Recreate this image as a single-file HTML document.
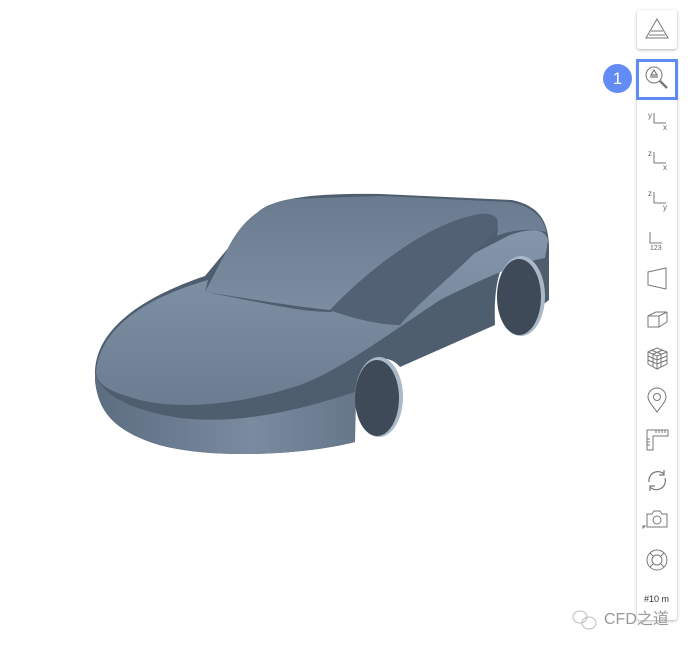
<!DOCTYPE html>
<html><head><meta charset="utf-8"><style>
html,body{margin:0;padding:0;background:#fff;width:692px;height:651px;overflow:hidden;position:relative;font-family:"Liberation Sans",sans-serif}
.box{position:absolute;background:#fff;border-radius:3px;box-shadow:0 1px 3px rgba(0,0,0,.3)}
</style></head><body>
<svg width="692" height="651" style="position:absolute;left:0;top:0">
<defs>
<linearGradient id="hood" x1="0" y1="0" x2="0" y2="1"><stop offset="0" stop-color="#8496ab"/><stop offset="1" stop-color="#6c7d91"/></linearGradient>
<linearGradient id="front" x1="0" y1="0" x2="1" y2="0"><stop offset="0" stop-color="#5d6d80"/><stop offset=".6" stop-color="#7a8ba0"/><stop offset="1" stop-color="#66778a"/></linearGradient>
<linearGradient id="roof" x1="0" y1="0" x2="0" y2="1"><stop offset="0" stop-color="#6a7b90"/><stop offset="1" stop-color="#7c8da2"/></linearGradient>
</defs>
<path d="M95,372 C96,330 140,298 205,276 L258,212 C275,197 320,193 380,194 L512,200 C540,206 548,222 549,245 L549,300 L541,306 C538,270 520,252 505,262 C496,275 494,300 495,325 L400,367 C388,352 362,356 356,392 L355,442 C300,456 200,460 150,442 C112,428 98,410 95,380 Z" fill="#4f5e6f"/>
<path d="M95,372 C100,395 130,410 180,418 C240,425 300,410 355,392 L355,442 C300,456 200,460 150,442 C112,428 98,410 95,380 Z" fill="url(#front)"/>
<path d="M96,372 C100,328 145,298 208,280 L205,292 C260,302 300,312 330,312 C390,300 470,255 510,235 C530,228 545,228 548,240 L545,258 C520,262 480,280 440,300 C380,340 340,370 300,385 C240,405 180,410 140,400 C110,392 97,385 96,372 Z" fill="url(#hood)"/>
<path d="M205,292 L228,248 C242,220 262,204 292,199 L380,196 L510,202 C532,206 544,218 546,232 C530,228 510,230 497,236 C500,222 495,213 480,214 C430,222 370,268 330,310 C290,306 245,298 205,292 Z" fill="url(#roof)"/>
<path d="M330,310 C370,268 430,222 480,214 C498,212 502,222 494,232 C470,262 420,300 400,325 C380,325 350,318 330,310 Z" fill="#526173"/>
<ellipse cx="521" cy="296" rx="24" ry="40" fill="#aab8c8"/>
<ellipse cx="519" cy="297" rx="22" ry="38" fill="#3f4a58"/>
<ellipse cx="379" cy="397" rx="24" ry="40" fill="#aab8c8"/>
<ellipse cx="377" cy="398" rx="22" ry="38" fill="#3f4a58"/>
</svg>

<div style="position:absolute;left:603px;top:64px;width:29px;height:29px;border-radius:50%;background:#628cf3;color:#fff;font-size:17px;line-height:29px;text-align:center">1</div>

<div class="box" style="left:637px;top:10px;width:40px;height:39px"></div>
<div class="box" style="left:637px;top:60px;width:40px;height:560px"></div>
<div style="position:absolute;left:636px;top:59px;width:36px;height:35px;border:3px solid #5f8bf4"></div>

<svg width="692" height="651" style="position:absolute;left:0;top:0" fill="none" stroke="#777" stroke-width="1">
<path d="M657,19 L668,38 L646,38 Z M651,31 H663 M649,35 H665"/>
<circle cx="654" cy="75" r="8"/><path d="M660,81 L667,88" stroke-width="2.4"/>
<path d="M654,70 L657,75 L651,75 Z M650,77 H658" stroke-width="1.2"/>
<path d="M654,113 V123 H666"/><path d="M654,152 V163 H666"/><path d="M654,192 V203 H666"/><path d="M650,232 V243 H662"/>
<path d="M648,272 L666,268 V289 L648,285 Z"/>
<path d="M648,316 H659 V327 H648 Z M648,316 L656,312 H667 L659,316 M667,312 V322 L659,327"/>
<path d="M648,352 L657,348 L667,352 V364 L657,369 L648,364 Z M648,352 L657,356 L667,352 M657,356 V369 M648,356 L657,360 L667,356 M648,360 L657,364 L667,360 M651,350 L661,354 L661,367 M663,350 L653,354 L653,367"/>
<path d="M657,412 C652,405 648,401 648,397 A9,9 0 0 1 666,397 C666,401 662,405 657,412 Z"/><circle cx="657" cy="397" r="3.5"/>
<path d="M647,430 H668 V436 H653 V450 H647 Z M656,430 V433 M659,430 V433 M662,430 V433 M665,430 V433 M647,439 H650 M647,442 H650 M647,445 H650"/>
<path d="M649,482 A9,9 0 0 1 664,474 M665,478 A9,9 0 0 1 650,487" stroke-width="1.2"/>
<path d="M664,470 V475 H659 M650,491 V486 H655" stroke-width="1.2"/>
<path d="M647,514 H652 L654,511 H660 L662,514 H667 V527 H647 Z"/><circle cx="657" cy="520" r="4"/>
<path d="M643,526 L645,526 L643,528 Z" fill="#777"/>
<circle cx="657" cy="560" r="10"/><circle cx="657" cy="560" r="5"/>
<path d="M650,553 L653,556 M664,553 L661,556 M650,567 L653,564 M664,567 L661,564"/>
<!-- wechat -->
<g stroke="#bbb"><ellipse cx="580" cy="617" rx="7" ry="6"/><ellipse cx="589" cy="623" rx="7" ry="6"/></g>
</svg>
<div style="position:absolute;left:648px;top:112px;font-size:8px;color:#666;line-height:8px">y</div>
<div style="position:absolute;left:663px;top:124px;font-size:8px;color:#666;line-height:8px">x</div>
<div style="position:absolute;left:648px;top:150px;font-size:8px;color:#666;line-height:8px">z</div>
<div style="position:absolute;left:663px;top:164px;font-size:8px;color:#666;line-height:8px">x</div>
<div style="position:absolute;left:648px;top:190px;font-size:8px;color:#666;line-height:8px">z</div>
<div style="position:absolute;left:663px;top:204px;font-size:8px;color:#666;line-height:8px">y</div>
<div style="position:absolute;left:650px;top:245px;font-size:7px;color:#666;line-height:8px">123</div>
<div style="position:absolute;left:644px;top:594px;font-size:9px;color:#333;line-height:10px">#10 m</div>

<div style="position:absolute;left:604px;top:610px;font-size:16px;color:#999;line-height:20px;font-family:'Liberation Sans','Noto Sans CJK SC',sans-serif">CFD之道</div>
</body></html>
